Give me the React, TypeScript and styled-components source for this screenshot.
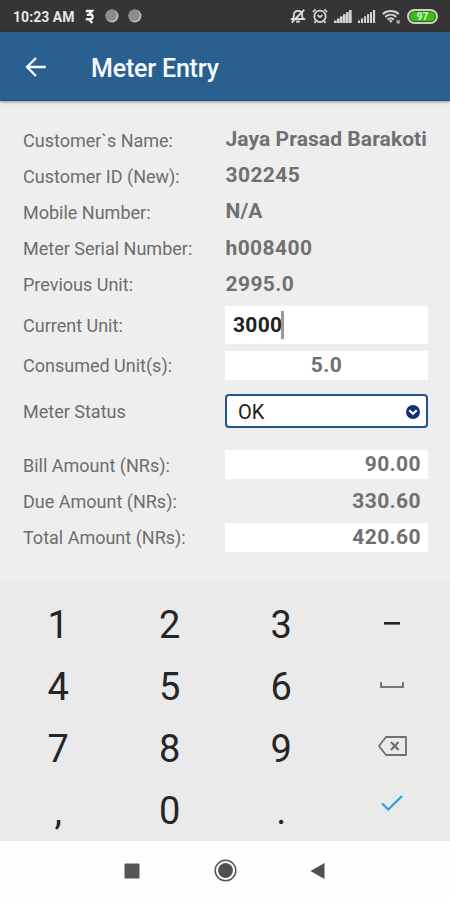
import React from "react";
import styled, { createGlobalStyle } from "styled-components";

const GlobalStyle = createGlobalStyle`
  * { box-sizing: border-box; }
  body { margin: 0; background: #fefefe; font-family: Roboto, "Liberation Sans", sans-serif; }
`;

const Screen = styled.div`
  width: 450px;
  height: 900px;
  display: flex;
  flex-direction: column;
  overflow: hidden;
  background: #eeeeee;
`;

const StatusBar = styled.div`
  height: 32px;
  flex: none;
  display: flex;
  align-items: center;
  justify-content: space-between;
  padding: 0 12px 0 13px;
  background: #353535;
  color: #e6e6e6;
`;

const StatusGroup = styled.div`
  display: flex;
  align-items: center;
`;

const Clock = styled.span`
  width: 72px;
  font-size: 14px;
  font-weight: 700;
  line-height: 16px;
  letter-spacing: 0.05px;
  white-space: nowrap;
  padding-top: 1px;
`;

const Icon = styled.svg`
  display: block;
  flex: none;
  overflow: visible;
`;

const AppBar = styled.header`
  height: 69px;
  flex: none;
  display: flex;
  align-items: center;
  padding-left: 25px;
  background: #2a6090;
  border-bottom: 1px solid #1f5a86;
  box-shadow: 0 1px 3px rgba(0, 0, 0, 0.4);
  z-index: 1;
`;

const BackIcon = styled(Icon)`
  margin-top: 1px;
`;

const Title = styled.h1`
  margin: 0 0 0 44px;
  font-size: 25px;
  font-weight: 500;
  line-height: 32px;
  letter-spacing: -0.18px;
  color: #f6fbff;
  padding-top: 5px;
`;

const Form = styled.main`
  height: 481px;
  flex: none;
  padding: 20.5px 22px 0 23px;
`;

const Row = styled.div<{ $height?: number; $gap?: number }>`
  display: grid;
  grid-template-columns: 202px 203px;
  align-items: center;
  height: ${(p) => p.$height ?? 36.2}px;
  margin-top: ${(p) => p.$gap ?? 0}px;
`;

const Label = styled.label`
  font-size: 18px;
  line-height: 24px;
  color: #6d6d6d;
  white-space: nowrap;
  padding-top: 2px;
`;

const Value = styled.output<{ $boxed?: boolean; $align?: string; $tight?: boolean }>`
  height: 29px;
  display: block;
  font-size: 21px;
  font-weight: 700;
  line-height: 29px;
  letter-spacing: ${(p) => (p.$tight ? 0.08 : 0.4)}px;
  white-space: nowrap;
  color: #707070;
  text-align: ${(p) => p.$align ?? "left"};
  padding: 0 ${(p) => (p.$align === "right" ? 7 : 0)}px 0 ${(p) => (p.$align ? 0 : 0.5)}px;
  background: ${(p) => (p.$boxed ? "#fff" : "transparent")};
`;

const Field = styled.div`
  height: 38px;
  display: flex;
  align-items: center;
  padding-left: 8px;
  background: #fff;
  font-size: 21px;
  font-weight: 700;
  letter-spacing: 0.3px;
  color: #222;
`;

const Caret = styled.span`
  width: 3px;
  height: 28px;
  margin-left: -1px;
  background: #999;
`;

const Select = styled.div`
  height: 34px;
  display: flex;
  align-items: center;
  justify-content: space-between;
  padding: 1px 6px 0 11px;
  border: 2px solid #22558a;
  border-radius: 4px;
  background: #fff;
  font-size: 20px;
  color: #1d1d1d;
`;

const Keypad = styled.section`
  height: 259px;
  flex: none;
  display: grid;
  grid-template-columns: 111.5px 111.5px 111.5px 110px;
  grid-template-rows: repeat(4, 62px);
  padding: 11px 2px 0 2.5px;
  background: #eaeaea;
`;

const Key = styled.button<{ $lift?: number }>`
  display: flex;
  align-items: center;
  justify-content: center;
  margin: 0;
  padding: ${(p) => (p.$lift === undefined ? 1 : 0)}px 0 ${(p) => p.$lift ?? 0}px;
  border: 0;
  background: none;
  font: 400 38px/44px Roboto, "Liberation Sans", sans-serif;
  color: #262626;
`;

const NavBar = styled.nav`
  height: 59px;
  flex: none;
  display: grid;
  grid-template-columns: 93px 93px 91px;
  justify-content: center;
  justify-items: center;
  align-items: center;
  padding-right: 2px;
  background: #fefefe;
`;

const BellOff = () => (
  <Icon width="16" height="16" viewBox="0 0 16 16" fill="none" stroke="#dedede" strokeWidth="1.8">
    <path d="M2.6 11.2C4.2 9.8 3.6 8.2 3.9 6.4C4.2 4 6 2.8 8 2.8S11.8 4 12.1 6.4C12.4 8.2 11.8 9.8 13.4 11.2Z" />
    <path d="M1.8 14.5L14.2 1.8M0.8 11.2H15.2M6 13.6H10" />
  </Icon>
);

const Alarm = () => (
  <Icon width="16" height="16" viewBox="0 0 16 16" fill="none" stroke="#d8d8d8" strokeWidth="1.7">
    <circle cx="8" cy="8.4" r="5.7" />
    <path d="M5.6 7L8 9.2L10.4 7M0.8 4L3.6 1.4M15.2 4L12.4 1.4M3.8 13L2.4 15M12.2 13L13.6 15" />
  </Icon>
);

const Signal = ({ spaced }: { spaced?: boolean }) => (
  <Icon width="18" height="14" viewBox="0 0 18 14" fill="#d2d2d2">
    {[0, 1, 2, 3, 4, 5].map((i) => (
      <rect key={i} x={i * 3} y={11.5 - i * 2.1} width={spaced ? 2.1 : 2.7} height={2.5 + i * 2.1} />
    ))}
  </Icon>
);

const Wifi = () => (
  <Icon width="19" height="15" viewBox="0 0 19 15" fill="none" stroke="#d4d4d4" strokeWidth="2.1">
    <path d="M0.8 5C5 1 12.5 1 16.8 5M3.3 7.9C6.5 5.1 11 5.1 14.2 7.9M5.7 10.6C7.7 8.9 9.9 8.9 11.9 10.6" />
    <path d="M6.9 11.6Q8.8 10.3 10.7 11.6L8.8 14Z" fill="#d4d4d4" stroke="none" />
    <rect x="14.5" y="11.2" width="3.3" height="3.3" fill="#aaa" stroke="none" />
  </Icon>
);

const Battery = styled.span`
  width: 31px;
  height: 15px;
  margin-left: 6px;
  border: 2px solid #c9d4c5;
  border-radius: 8px;
  background: #42b91b;
  box-shadow: inset 0 0 0 1px #2b6e18;
  color: #d9ffd0;
  font-size: 10px;
  font-weight: 700;
  line-height: 11px;
  text-align: center;
`;

const Spaced = styled.span<{ $left: number }>`
  display: block;
  margin-left: ${(p) => p.$left}px;
`;

const Dot = () => (
  <Icon width="14" height="14" viewBox="0 0 14 14">
    <circle cx="7" cy="7" r="6.5" fill="#bdbdbd" />
    <circle cx="6.2" cy="6.2" r="5.6" fill="#8b8b8b" />
  </Icon>
);

const details: [string, string][] = [
  ["Customer`s Name:", "Jaya Prasad Barakoti"],
  ["Customer ID (New):", "302245"],
  ["Mobile Number:", "N/A"],
  ["Meter Serial Number:", "h008400"],
  ["Previous Unit:", "2995.0"],
];

export default function App() {
  return (
    <Screen>
      <GlobalStyle />
      <StatusBar>
        <StatusGroup>
          <Clock>10:23 AM</Clock>
          <Icon width="9" height="15" viewBox="0 0 9 15" fill="none" stroke="#f0f0f0" strokeWidth="2.4">
            <path d="M0.8 2H7L4.2 5.3C8.8 5.3 8.6 10.3 4.8 10.3H0.8M4.6 5.9H1.8M4.3 10.5L7.2 14" />
          </Icon>
          <Spaced $left={11}><Dot /></Spaced>
          <Spaced $left={9}><Dot /></Spaced>
        </StatusGroup>
        <StatusGroup>
          <BellOff />
          <Spaced $left={6}><Alarm /></Spaced>
          <Spaced $left={6}><Signal /></Spaced>
          <Spaced $left={6}><Signal spaced /></Spaced>
          <Spaced $left={6}><Wifi /></Spaced>
          <Battery>97</Battery>
        </StatusGroup>
      </StatusBar>

      <AppBar>
        <BackIcon width="22" height="20" viewBox="0 0 22 20" fill="none" stroke="#f6fbff" strokeWidth="2.3">
          <path d="M20.7 10H2.5M11 1L2 10L11 19" />
        </BackIcon>
        <Title>Meter Entry</Title>
      </AppBar>

      <Form>
        {details.map(([label, value]) => (
          <Row key={label}>
            <Label>{label}</Label>
            <Value $tight={/^[A-Z]/.test(value)}>{value}</Value>
          </Row>
        ))}
        <Row $height={44} $gap={0.5}>
          <Label>Current Unit:</Label>
          <Field>3000<Caret /></Field>
        </Row>
        <Row $height={36.5}>
          <Label>Consumed Unit(s):</Label>
          <Value $boxed $align="center">5.0</Value>
        </Row>
        <Row $height={56}>
          <Label>Meter Status</Label>
          <Select>
            OK
            <Icon width="14" height="14" viewBox="0 0 14 14">
              <circle cx="7" cy="7" r="7" fill="#102e7a" />
              <path d="M3.3 5.2L7 8.8L10.7 5.2" fill="none" stroke="#fff" strokeWidth="2.2" />
            </Icon>
          </Select>
        </Row>
        <Row $gap={7.3}>
          <Label>Bill Amount (NRs):</Label>
          <Value $boxed $align="right">90.00</Value>
        </Row>
        <Row>
          <Label>Due Amount (NRs):</Label>
          <Value $align="right">330.60</Value>
        </Row>
        <Row>
          <Label>Total Amount (NRs):</Label>
          <Value $boxed $align="right">420.60</Value>
        </Row>
      </Form>

      <Keypad>
        <Key>1</Key>
        <Key>2</Key>
        <Key>3</Key>
        <Key aria-label="minus" $lift={1}>
          <Icon width="16" height="3" viewBox="0 0 16 3"><rect width="16" height="2.6" fill="#222" /></Icon>
        </Key>
        <Key>4</Key>
        <Key>5</Key>
        <Key>6</Key>
        <Key aria-label="space" $lift={3}>
          <Icon width="24" height="6" viewBox="0 0 24 6" fill="none" stroke="#777" strokeWidth="2">
            <path d="M1 0V5H23V0" />
          </Icon>
        </Key>
        <Key>7</Key>
        <Key>8</Key>
        <Key>9</Key>
        <Key aria-label="delete" $lift={4}>
          <Icon width="29" height="20" viewBox="0 0 29 20" fill="none" stroke="#707070" strokeWidth="1.8">
            <path d="M8 1H28V19H8L1 10Z" strokeLinejoin="round" />
            <path d="M13 6L20.5 14M20.5 6L13 14" strokeWidth="2.2" />
          </Icon>
        </Key>
        <Key>,</Key>
        <Key>0</Key>
        <Key>.</Key>
        <Key aria-label="done" $lift={14}>
          <Icon width="22" height="16" viewBox="0 0 22 16" fill="none" stroke="#2f9fd8" strokeWidth="2.3">
            <path d="M1 8.5L7.3 14.5L21 1" />
          </Icon>
        </Key>
      </Keypad>

      <NavBar>
        <Icon width="16" height="16" viewBox="0 0 16 16"><rect x="0.5" y="0.5" width="15" height="15" rx="0.8" fill="#555" /></Icon>
        <Icon width="23" height="23" viewBox="0 0 23 23">
          <circle cx="11.5" cy="11.5" r="10.3" fill="none" stroke="#555" strokeWidth="1.5" />
          <circle cx="11.5" cy="11.5" r="7.4" fill="#505050" />
        </Icon>
        <Icon width="15" height="16" viewBox="0 0 15 16"><path d="M0.5 8L14.5 0V16Z" fill="#505050" /></Icon>
      </NavBar>
    </Screen>
  );
}
